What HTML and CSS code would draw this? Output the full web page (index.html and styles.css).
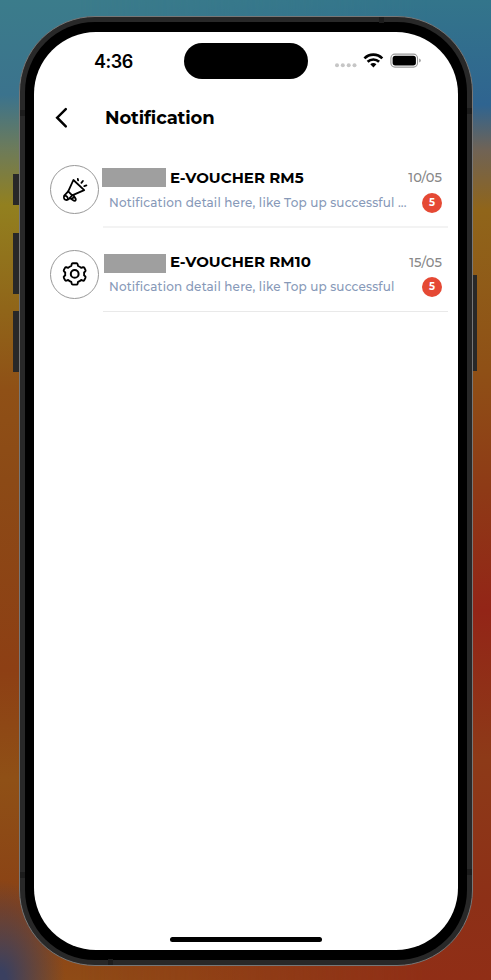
FILE: index.html
```html
<!DOCTYPE html>
<html lang="en">
<head>
<meta charset="utf-8">
<title>Notification</title>
<link rel="stylesheet" href="styles.css">
</head>
<body>
<div class="phone">
  <i class="key key-action"></i><i class="key key-up"></i><i class="key key-down"></i><i class="key key-power"></i>
  <i class="band band-top"></i><i class="band band-bottom"></i><i class="band band-left-top"></i><i class="band band-left-bottom"></i><i class="band band-right-top"></i><i class="band band-right-bottom"></i>
  <div class="bezel">
    <main class="screen">
      <div class="status">
        <span class="time">4:36</span>
        <div class="island"></div>
        <svg class="indicators" width="88" height="20" viewBox="0 0 88 20">
          <g fill="#c6c6c6"><circle cx="3" cy="14.3" r="2"/><circle cx="8.8" cy="14.3" r="2"/><circle cx="14.7" cy="14.3" r="2"/><circle cx="20.5" cy="14.3" r="2"/></g>
          <g fill="none" stroke="#000" stroke-width="2.6"><path d="M30.4 7.4c5-5 12.9-5 17.9 0"/><path d="M33.6 10.8c3.2-3.1 8.3-3.1 11.5 0"/></g>
          <path d="M36.3 13.3c1.7-1.6 4.4-1.6 6.1 0l-3 3.1z"/>
          <rect x="56.9" y="3.1" width="26.6" height="13" rx="4" fill="#fff" stroke="#999" stroke-width="1.1"/>
          <rect x="58.6" y="4.8" width="23.3" height="9.6" rx="2.6"/>
          <path d="M85.2 7.4v4.2q1.6-.5 1.6-2.1t-1.6-2.1z" fill="#999"/>
        </svg>
      </div>
      <header class="bar">
        <svg class="back" width="14" height="22" viewBox="0 0 14 22"><path d="M11.8 2.2 3.2 10.7l8.6 8.6" fill="none" stroke="#000" stroke-width="2.5" stroke-linecap="round"/></svg>
        <h1>Notification</h1>
      </header>
      <section class="list">
        <article class="row">
          <div class="avatar">
            <svg width="26" height="26" viewBox="0 0 26 26" fill="none" stroke="#000" stroke-width="1.8" stroke-linejoin="round" stroke-linecap="round"><path d="M11.4 3 22.2 13.2 10.2 18.3 6.2 14.4z"/><path d="m6.2 14.4-3.7 3.9c-.9 1.3-.7 3.4.4 4.2 1.4.8 3 .5 4.1-.6l3.2-3.6"/><path d="M2.6 18.6c1.8 0 3.4 1.4 3.3 3.6"/><path d="m8.1 21.2 3.9 2.5c1.7.5 2.4-1.2 1.3-2.5l-2-3.2M10.1 21.5l1.5-1"/><path d="m15.8 1.8.3 1.6M20.9 4l-1.5 1.8M22.3 9.1l2.1-.7"/></svg>
          </div>
          <div class="body">
            <div class="line"><span class="mask"></span><h2>E-VOUCHER RM5</h2><time>10/05</time></div>
            <div class="line detail"><p>Notification detail here, like Top up successful <span class="dots">...</span></p><span class="badge">5</span></div>
          </div>
        </article>
        <article class="row second">
          <div class="avatar">
            <svg width="28" height="28" viewBox="0 0 28 28" fill="none" stroke="#000" stroke-width="2" stroke-linejoin="round"><circle cx="13.7" cy="13.9" r="3.9"/><path transform="translate(1.1 .7) scale(.93 .965)" d="M11.5 2.6h4q1 0 1.2 1l.4 1.8q2 .7 3.4 2l1.9-.6q1-.3 1.5.6l1.2 2.2q.5.9-.3 1.6l-1.2 1.1q.2 1.4 0 2.8l1.2 1.1q.8.7.3 1.6l-1.2 2.2q-.5.9-1.5.6l-1.9-.6q-1.4 1.3-3.4 2l-.4 1.8q-.2 1-1.2 1h-4q-1 0-1.2-1l-.4-1.8q-2-.7-3.4-2l-1.9.6q-1 .3-1.5-.6l-1.2-2.2q-.5-.9.3-1.6l1.2-1.1q-.2-1.4 0-2.8l-1.2-1.1q-.8-.7-.3-1.6l1.2-2.2q.5-.9 1.5-.6l1.9.6q1.4-1.3 3.4-2l.4-1.8q.2-1 1.2-1z"/></svg>
          </div>
          <div class="body">
            <div class="line"><span class="mask"></span><h2>E-VOUCHER RM10</h2><time>15/05</time></div>
            <div class="line detail"><p>Notification detail here, like Top up successful</p><span class="badge">5</span></div>
          </div>
        </article>
      </section>
      <div class="home"></div>
    </main>
  </div>
</div>
</body>
</html>
```
FILE: styles.css
```css
* { box-sizing: border-box; }
body {
  margin: 0;
  height: 980px;
  padding: 16px 18px 14px 19px;
  overflow: hidden;
  position: relative;
  font-family: Montserrat, Inter, sans-serif;
  background:
    radial-gradient(ellipse 65px 100px at 0 100%, #3a4060 10%, #3a406000),
    linear-gradient(#3b7c8b, #3b738d 95px, #6c7b5b 148px, #92801f 205px, #906519 310px, #8f5016 390px, #8c4a16 480px, #8d3f14 670px, #8f5016 780px, #8a4115 910px, #8f4b16 980px);
}
body::before {
  content: "";
  position: absolute;
  inset: 0;
  background:
    radial-gradient(ellipse 75px 35px at 170px 100%, #933015 30%, #93301500),
    linear-gradient(#33758b, #2f6490 105px, #706355 150px, #90651a 210px, #8f5016 370px, #8e3a16 490px, #932517 610px, #8d3a18 760px, #8d3017 900px, #902e16 980px);
  mask-image: linear-gradient(90deg, transparent 80px, #000 430px);
}
.phone {
  position: relative;
  width: 454px;
  height: 950px;
  padding: 5px;
  border: 1px solid #777;
  border-radius: 76px;
  background: #282828;
}
.bezel {
  height: 938px;
  padding: 10px 9px;
  border-radius: 70px;
  background: #000;
}
.screen {
  display: flex;
  flex-direction: column;
  width: 424px;
  height: 918px;
  border-radius: 62px;
  background: #fff;
  color: #000;
}
.key { position: absolute; width: 6px; background: #282828; }
.key-action { left: -7px; top: 157px; height: 31px; }
.key-up { left: -7px; top: 216px; height: 61px; }
.key-down { left: -7px; top: 294px; height: 61px; }
.key-power { right: -5px; width: 4px; top: 258px; height: 96px; }
.band { position: absolute; background: #1c1c1c; width: 5px; height: 6px; }
.band-top { left: 359px; top: 0; }
.band-bottom { left: 88px; bottom: 0; }
.band-left-top { left: 0; top: 93px; }
.band-left-bottom { left: 0; top: 855px; }
.band-right-top { right: 0; top: 91px; }
.band-right-bottom { right: 0; top: 852px; }
.status {
  display: flex;
  align-items: center;
  height: 58px;
  padding-left: 60px;
}
.time { width: 90px; font: 600 18px/22px Inter, sans-serif; letter-spacing: -.45px; padding-top: 1px; }
.island { width: 124px; height: 36.5px; border-radius: 19px; background: #000; }
.indicators { margin-left: 26px; }
.bar { display: flex; align-items: center; height: 56px; padding-left: 20px; }
h1, h2, p { margin: 0; white-space: nowrap; }
h1 { margin-left: 37px; font-size: 18px; line-height: 24px; font-weight: 700; letter-spacing: -.15px; }
.list { padding: 10px 10px 0 16px; }
.row { display: flex; height: 84.7px; padding-top: 9px; }
.avatar {
  display: flex;
  align-items: center;
  justify-content: center;
  width: 49px;
  height: 49px;
  border: 1px solid #999;
  border-radius: 50%;
}
.body { width: 345px; height: 63px; margin-left: 4px; border-bottom: 2px solid #f3f3f3; }
.second .body { height: 62.3px; border-bottom-width: 1px; border-color: #e9e9e9; }
.line { display: flex; align-items: center; height: 25px; padding-right: 6px; }
.mask { width: 64px; height: 19px; margin-left: -.6px; background: #9f9f9f; }
.second .mask { width: 62px; margin: 2px 0 0 1.4px; }
h2 { margin-left: 3.6px; font-size: 15px; line-height: 20px; font-weight: 700; letter-spacing: .05px; }
time { margin-left: auto; font-size: 13px; line-height: 18px; font-weight: 500; color: #888; position: relative; top: -.7px; }
.detail { padding-left: 6px; }
p { font-size: 12px; line-height: 18px; font-weight: 500; color: #8799b8; letter-spacing: .165px; }
.badge {
  width: 20px;
  height: 20px;
  margin-left: auto;
  border-radius: 50%;
  background: #e54934;
  color: #fff;
  font-size: 10px;
  line-height: 20px;
  font-weight: 700;
  text-align: center;
}
.home { width: 152px; height: 5px; margin: auto auto 8px; border-radius: 3px; background: #000; }
```
